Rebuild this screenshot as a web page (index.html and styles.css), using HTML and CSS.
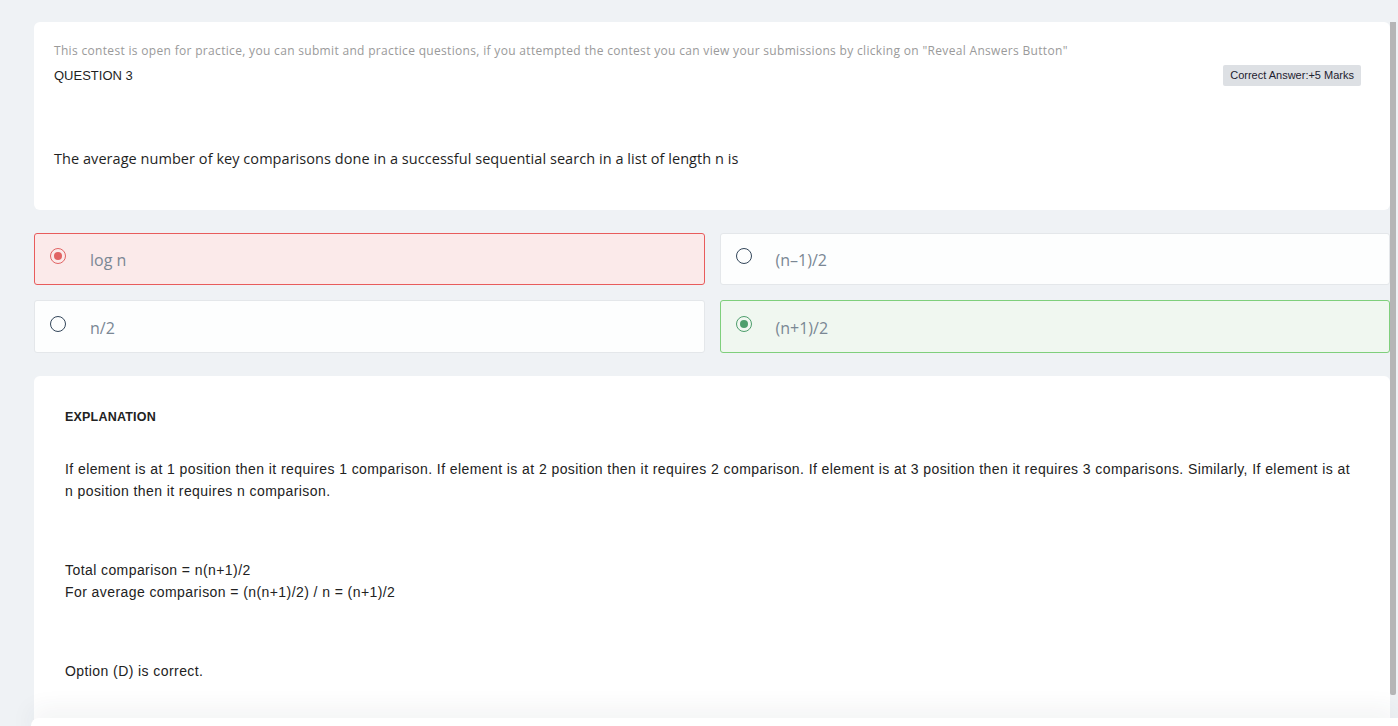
FILE: index.html
```html
<!DOCTYPE html>
<html lang="en">
<head>
<meta charset="utf-8">
<title>Question 3</title>
<link rel="stylesheet" href="styles.css">
</head>
<body>
<div class="page">
  <div class="main">
    <section class="card question-card">
      <p class="notice">This contest is open for practice, you can submit and practice questions, if you attempted the contest you can view your submissions by clicking on "Reveal Answers Button"</p>
      <div class="q-head">
        <span class="q-num">QUESTION 3</span>
        <span class="badge">Correct Answer:+5 Marks</span>
      </div>
      <p class="q-text">The average number of key comparisons done in a successful sequential search in a list of length n is</p>
    </section>

    <div class="options">
      <div class="option wrong">
        <span class="radio checked"></span>
        <span class="opt-text">log n</span>
      </div>
      <div class="option">
        <span class="radio"></span>
        <span class="opt-text">(n–1)/2</span>
      </div>
      <div class="option">
        <span class="radio"></span>
        <span class="opt-text">n/2</span>
      </div>
      <div class="option right">
        <span class="radio checked"></span>
        <span class="opt-text">(n+1)/2</span>
      </div>
    </div>

    <section class="card explanation">
      <h4 class="exp-title">EXPLANATION</h4>
      <p class="exp-p">If element is at 1 position then it requires 1 comparison. If element is at 2 position then it requires 2 comparison. If element is at 3 position then it requires 3 comparisons. Similarly, If element is at n position then it requires n comparison.</p>
      <p class="exp-p gap">Total comparison = n(n+1)/2<br>For average comparison = (n(n+1)/2) / n = (n+1)/2</p>
      <p class="exp-p gap">Option (D) is correct.</p>
      <div class="exp-tail"></div>
    </section>
  </div>
  <div class="scrollbar"><div class="thumb"></div></div>
</div>
<div class="bottom-bar"></div>
</body>
</html>
```

FILE: styles.css
```css
html, body {
  margin: 0;
  padding: 0;
}
body {
  background: #eff2f5;
  font-family: "Open Sans", "Noto Sans", sans-serif;
  color: #222;
  height: 726px;
  overflow: hidden;
}
.page {
  display: flex;
  align-items: flex-start;
  padding: 22px 2px 0 34px;
  box-sizing: border-box;
  height: 726px;
  overflow: hidden;
}
.main {
  flex: 1;
  min-width: 0;
}
.scrollbar {
  width: 6px;
  flex: none;
}
.thumb {
  height: 673px;
  background: #b5b5b6;
  border-radius: 0 0 2px 2px;
}
.card {
  background: #fff;
  border-radius: 6px;
}
.question-card {
  height: 188px;
  box-sizing: border-box;
  padding: 21px 20px 0 20px;
}
.notice {
  margin: 0;
  font-size: 12px;
  line-height: 16px;
  color: #9a9a9a;
  letter-spacing: 0.32px;
}
.q-head {
  display: flex;
  justify-content: space-between;
  align-items: flex-start;
  margin-top: 2px;
}
.q-num {
  font-family: "Liberation Sans", Arial, sans-serif;
  font-size: 13px;
  color: #1f1f1f;
  line-height: 16px;
  margin-top: 7px;
}
.badge {
  font-family: "Liberation Sans", Arial, sans-serif;
  font-size: 11px;
  line-height: 21px;
  padding: 0 7px;
  background: #dde0e4;
  color: #1e2230;
  border-radius: 2px;
  margin-right: 9px;
  margin-top: 4px;
}
.q-text {
  margin: 63px 0 0;
  font-size: 14.5px;
  line-height: 20px;
  color: #1f1f1f;
  letter-spacing: 0.05px;
}
.options {
  margin-top: 23px;
  display: grid;
  grid-template-columns: 1fr 1fr;
  column-gap: 15px;
  row-gap: 15px;
}
.option {
  height: 52px;
  box-sizing: border-box;
  border: 1px solid #e4e7ea;
  background: #fdfefe;
  border-radius: 3px;
  display: flex;
  align-items: center;
  padding-left: 15px;
}
.option:nth-child(n+3) {
  height: 53px;
}
.option.wrong {
  background: #fbeaea;
  border-color: #e85c5c;
}
.option.right {
  background: #f0f7f0;
  border-color: #7fcf7c;
}
.radio {
  width: 14px;
  height: 14px;
  border: 1.5px solid #33465a;
  border-radius: 50%;
  flex: none;
  position: relative;
  margin-top: -6px;
}
.wrong .radio {
  border-color: #e16464;
}
.right .radio {
  border-color: #4e9e6c;
}
.radio.checked::after {
  content: "";
  position: absolute;
  left: 3px;
  top: 3px;
  width: 8px;
  height: 8px;
  border-radius: 50%;
  background: #e16464;
}
.right .radio.checked::after {
  background: #4e9e6c;
}
.opt-text {
  margin-left: 24px;
  font-size: 16px;
  color: #7a8794;
  margin-top: 2px;
}
.explanation {
  margin-top: 23px;
  padding: 34px 31px 0;
  font-family: "Liberation Sans", Arial, sans-serif;
  position: relative;
}
.exp-title {
  margin: 0;
  font-size: 12.5px;
  font-weight: bold;
  line-height: 14px;
  color: #222;
  letter-spacing: 0.2px;
}
.exp-p {
  margin: 34px 0 0;
  font-size: 14px;
  line-height: 22px;
  color: #222;
  letter-spacing: 0.42px;
}
.exp-p.gap {
  margin-top: 57px;
}
.exp-tail {
  height: 60px;
}
.bottom-bar {
  position: fixed;
  left: 31px;
  right: 0;
  top: 718px;
  height: 20px;
  background: #fff;
  border-radius: 8px 0 0 0;
  box-shadow: 0 -8px 24px rgba(40, 50, 70, 0.07);
}
```
